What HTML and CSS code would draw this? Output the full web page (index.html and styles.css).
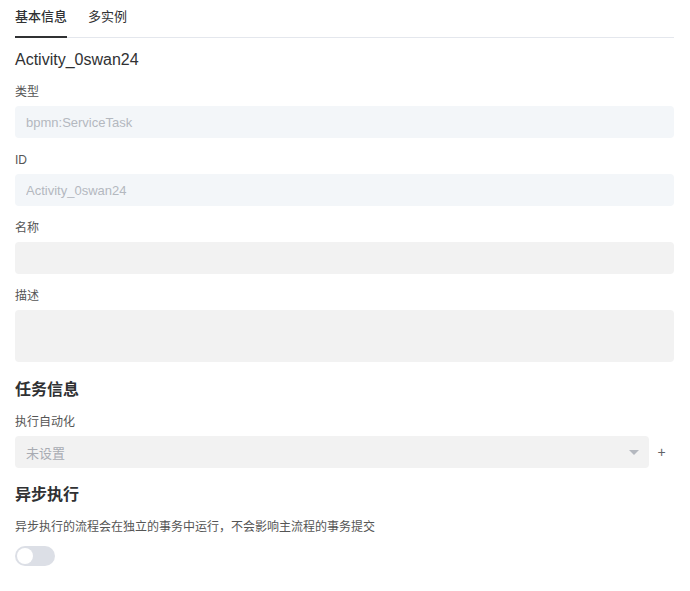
FILE: index.html
```html
<!DOCTYPE html>
<html lang="zh-CN">
<head>
  <meta charset="UTF-8">
  <meta name="viewport" content="width=device-width, initial-scale=1">
  <title>属性面板</title>
  <link rel="stylesheet" href="styles.css">
</head>

<body>

  <div class="panel">
    <div class="tabs">
      <div class="tab active">基本信息</div>
      <div class="tab">多实例</div>
    </div>

    <div class="element-title">Activity_0swan24</div>

    <div class="field">
      <label class="label">类型</label>
      <input class="input disabled" type="text" value="bpmn:ServiceTask" disabled>
    </div>

    <div class="field">
      <label class="label">ID</label>
      <input class="input disabled" type="text" value="Activity_0swan24" disabled>
    </div>

    <div class="field">
      <label class="label">名称</label>
      <input class="input" type="text">
    </div>

    <div class="field">
      <label class="label">描述</label>
      <textarea class="input textarea"></textarea>
    </div>

    <h2 class="section-title">任务信息</h2>

    <div class="field">
      <label class="label">执行自动化</label>
      <div class="select-row">
        <div class="select">
          <span class="placeholder">未设置</span>
          <span class="caret"></span>
        </div>
        <span class="add-btn">+</span>
      </div>
    </div>

    <h2 class="section-title async-title">异步执行</h2>
    <div class="hint">异步执行的流程会在独立的事务中运行，不会影响主流程的事务提交</div>
    <div class="switch"><span class="knob"></span></div>
  </div>

</body>
</html>
```

FILE: styles.css
```css
:root {
  --text-main: #303133;
  --text-label: #555;
  --text-muted: #a8abb2;
  --border: #e4e7ed;
  --input-bg: #f2f2f2;
  --disabled-bg: #f3f6f9;
}

* { margin: 0; padding: 0; box-sizing: border-box; }

body {
  font-family: 'Liberation Sans', 'Noto Sans CJK SC', sans-serif;
  background: #fff;
  color: var(--text-main);
}

.panel {
  padding: 0 16px 0 15px;
}

.tabs {
  display: flex;
  gap: 21px;
  height: 38px;
  border-bottom: 1px solid var(--border);
}

.tab {
  font-size: 13px;
  line-height: 34px;
  color: var(--text-main);
  border-bottom: 2px solid transparent;
  margin-bottom: -1px;
}

.tab.active {
  border-bottom-color: #303133;
  font-weight: 500;
}

.element-title {
  font-size: 16px;
  line-height: 24px;
  margin: 10px 0 10px;
  color: var(--text-main);
}

.field {
  margin-bottom: 12px;
}

.label {
  display: block;
  font-size: 12px;
  line-height: 20px;
  color: var(--text-label);
  margin-bottom: 4px;
}

.input {
  display: block;
  width: 100%;
  height: 32px;
  border: none;
  outline: none;
  border-radius: 4px;
  background: var(--input-bg);
  padding: 0 11px;
  font-family: inherit;
  font-size: 13px;
  color: var(--text-main);
}

.input.disabled {
  background: var(--disabled-bg);
  color: #b4b8bf;
}

.textarea {
  height: 52px;
  resize: none;
  padding: 6px 11px;
}

.section-title {
  font-size: 16px;
  font-weight: 600;
  line-height: 24px;
  margin: 16px 0 10px;
  color: var(--text-main);
}

.async-title {
  margin-top: 15px;
}

.select-row {
  display: flex;
  align-items: center;
}

.select {
  flex: 1;
  height: 32px;
  border-radius: 4px;
  background: var(--input-bg);
  display: flex;
  align-items: center;
  justify-content: space-between;
  padding: 0 10px 0 11px;
}

.placeholder {
  font-size: 13px;
  color: var(--text-muted);
}

.caret {
  width: 0;
  height: 0;
  border-left: 5px solid transparent;
  border-right: 5px solid transparent;
  border-top: 5px solid #b4b8bf;
}

.add-btn {
  width: 25px;
  text-align: center;
  font-size: 14px;
  color: #606266;
}

.hint {
  font-size: 12px;
  line-height: 20px;
  color: var(--text-label);
  margin-bottom: 9px;
}

.switch {
  width: 40px;
  height: 20px;
  border-radius: 10px;
  background: #dcdfe6;
  padding: 2px;
}

.knob {
  display: block;
  width: 16px;
  height: 16px;
  border-radius: 50%;
  background: #fff;
}
```
